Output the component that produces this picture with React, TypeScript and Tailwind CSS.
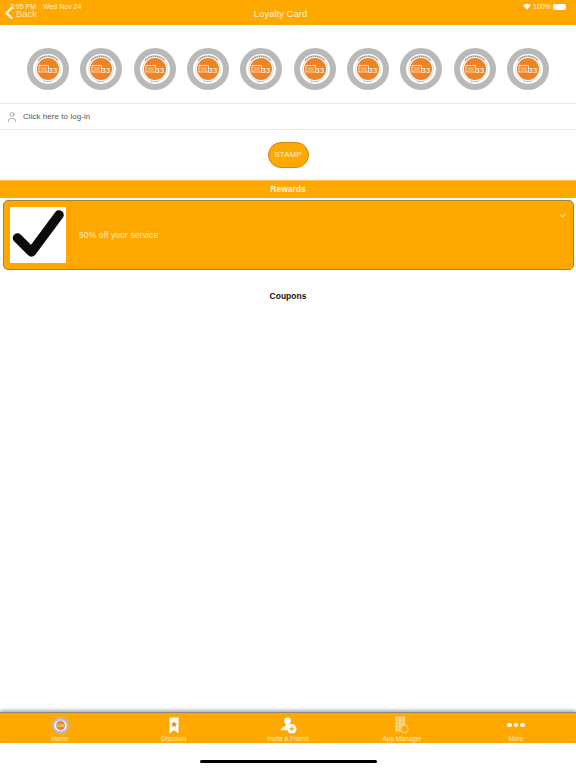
import { ChevronDown, ChevronLeft, User } from 'lucide-react';

const font = { fontFamily: '"Liberation Sans", Arial, sans-serif' };

function StampBadge({ size = 42 }: { size?: number }) {
  return (
    <svg width={size} height={size} viewBox="0 0 42 42" className="shrink-0">
      <circle cx="21" cy="21" r="21" fill="#b9b9b9" />
      <circle cx="21" cy="21" r="15" fill="#ffffff" />
      <circle cx="21" cy="21" r="12.4" fill="none" stroke="#c4c4c4" strokeWidth="0.6" />
      <circle cx="21" cy="21" r="11" fill="#ee8325" />
      <path d="M12 17.500h9.500v6.500H12z" fill="none" stroke="#fff" strokeWidth="0.7" />
      <path d="M13.500 20h6.500M13.500 22h6.500" stroke="#fff" strokeWidth="0.6" />
      <text x="21.200" y="25" fontSize="8" fill="#fff" fontFamily="Liberation Sans, sans-serif">33</text>
      <path d="M11 12.500a13.500 13.500 0 0 1 20 0" fill="none" stroke="#8f8f8f" strokeWidth="1.600" strokeDasharray="1.500 0.700" />
      <path d="M17 33.700h8" stroke="#a8a8a8" strokeWidth="1" strokeDasharray="1 0.600" />
    </svg>
  );
}

function BookmarkIcon() {
  return (
    <svg width="10" height="17" viewBox="0 0 10 17">
      <path d="M0.500 0.500h9v16l-4.500-3.500-4.500 3.500z" fill="#fff" />
      <path d="M5 4l1 2.200 2.200.2-1.700 1.500.5 2.200L5 9l-2 1.100.5-2.200L1.800 6.400l2.200-.2z" fill="#ee8325" />
    </svg>
  );
}

function InviteIcon() {
  return (
    <svg width="17" height="17" viewBox="0 0 18 18">
      <circle cx="8" cy="4" r="3.600" fill="#fff" />
      <path d="M6.500 7.500h3l.8 2.200c-1.800 1-2.800 2.600-3 4.300H0.500c.2-2.500 3-3.600 5-4.300z" fill="#fff" />
      <circle cx="12.500" cy="12.500" r="5" fill="#fff" />
      <path d="M12.500 10v5M10 12.500h5" stroke="#ffa800" strokeWidth="1.300" />
    </svg>
  );
}

function AppManagerIcon() {
  return (
    <svg width="14" height="18" viewBox="0 0 14 18" fill="none">
      <rect x="0.500" y="0.500" width="9.500" height="15" rx="1" fill="#ffd27a" stroke="#f6c469" />
      <path d="M2.500 3h1.500M6 3h1.500M2.500 6h1.500M6 6h1.500M2.500 9h1.500M2.500 12h1.500" stroke="#e8a11c" strokeWidth="1" />
      <circle cx="9.500" cy="13" r="3.600" fill="#ffa800" stroke="#ffd27a" strokeWidth="1.200" />
    </svg>
  );
}

function MoreIcon() {
  return (
    <div className="flex h-[18px] items-center gap-[2px]">
      <span className="h-[4.500px] w-[4.500px] rounded-full bg-white" />
      <span className="h-[4.500px] w-[4.500px] rounded-full bg-white" />
      <span className="h-[4.500px] w-[4.500px] rounded-full bg-white" />
    </div>
  );
}

const tabs = [
  { label: 'Home', icon: <StampBadge size={17} /> },
  { label: 'Discount', icon: <BookmarkIcon /> },
  { label: 'Invite A Friend', icon: <InviteIcon /> },
  { label: 'App Manager', icon: <AppManagerIcon /> },
  { label: 'More', icon: <MoreIcon /> },
];

export default function App() {
  return (
    <div style={font} className="flex h-[768px] w-[576px] flex-col overflow-hidden bg-white">
      <header className="relative flex h-[25px] shrink-0 items-center justify-center bg-[#ffa800] pr-[15px] pt-[2px] text-[#fff3dc]">
        <span className="text-[9.500px] leading-none">Loyalty Card</span>
        <div className="absolute left-[-1px] top-[3px] flex items-center text-[#ffe6b5]">
          <ChevronLeft size={20} strokeWidth={2.500} className="-mr-[3px] text-white" />
          <span className="pt-px text-[9.500px] leading-none">Back</span>
        </div>
        <span className="absolute left-[10px] top-[3px] text-[7px] leading-none text-[#fff1d6]">3:05 PM</span>
        <span className="absolute left-[43px] top-[3px] text-[7px] leading-none text-[#fff1d6]">Wed Nov 24</span>
        <div className="absolute right-[10px] top-[3px] flex items-center gap-[2px] text-[7px] leading-none text-[#fff1d6]">
          <svg width="8" height="7" viewBox="0 0 9 7">
            <path d="M4.500 7L0 2.200a6.400 6.400 0 0 1 9 0z" fill="#fff" />
          </svg>
          <span>100%</span>
          <span className="h-[6px] w-[13px] rounded-[2px] bg-white" />
        </div>
      </header>

      <div className="flex h-[78px] shrink-0 items-center justify-between px-[27px] pt-[10px] pb-0">
        {Array.from({ length: 10 }).map((_, i) => (
          <StampBadge key={i} />
        ))}
      </div>

      <div className="flex h-[27px] shrink-0 items-center gap-[5px] border-y border-[#e8e8e8] pl-[6px] pt-px text-[8px] tracking-[0.05px] text-[#555]">
        <User size={12} strokeWidth={0.900} className="text-[#555]" />
        <span>Click here to log-in</span>
      </div>

      <div className="flex h-[50px] shrink-0 items-center justify-center pb-px">
        <button className="h-[26px] w-[41px] rounded-[13px] border border-[#c98a16] bg-[#ffa800] text-[8px] text-[#ffeccb]">
          STAMP
        </button>
      </div>

      <div className="flex h-[18px] shrink-0 items-center justify-center border-t border-[#ffc04d] bg-[#ffa800] text-[8.500px] font-bold text-[#fff3dc]">
        Rewards
      </div>

      <div className="relative mx-[2.500px] mt-[2px] flex h-[70px] shrink-0 items-center gap-[13px] rounded-[5px] border border-[#a8803a] bg-[#ffa800] pl-[6.500px]">
        <div className="flex h-[56px] w-[56px] items-center justify-center bg-white">
          <svg width="56" height="56" viewBox="0 0 56 56">
            <path d="M7.500 31l14 14L49 8" fill="none" stroke="#0b0b0b" strokeWidth="9.500" strokeLinecap="round" strokeLinejoin="round" />
          </svg>
        </div>
        <span className="text-[8.500px] tracking-[0.12px] text-[#ffe9c0]">50% off your service</span>
        <ChevronDown size={11} strokeWidth={2} className="absolute right-[5px] top-[9px] text-[#ffe9c0]" />
      </div>

      <div className="mt-[21px] shrink-0 text-center text-[8.500px] leading-[10px] font-bold text-[#111]">Coupons</div>

      <div className="flex-1" />

      <nav className="flex h-[31px] shrink-0 border-t border-[#8a8a7a] bg-[#ffa800] px-[3px] shadow-[0_-2px_3px_rgba(0,0,0,0.3)]">
        {tabs.map((t) => (
          <div key={t.label} className="flex flex-1 flex-col items-center pt-[3px]">
            <div className="flex h-[18px] items-center">{t.icon}</div>
            <span className="mt-[2px] text-[6.500px] leading-none text-[#ffe6b5]">{t.label}</span>
          </div>
        ))}
      </nav>

      <div className="flex h-[25px] shrink-0 items-start justify-center pt-[17px]">
        <div className="h-[3px] w-[177px] rounded-full bg-black" />
      </div>
    </div>
  );
}
